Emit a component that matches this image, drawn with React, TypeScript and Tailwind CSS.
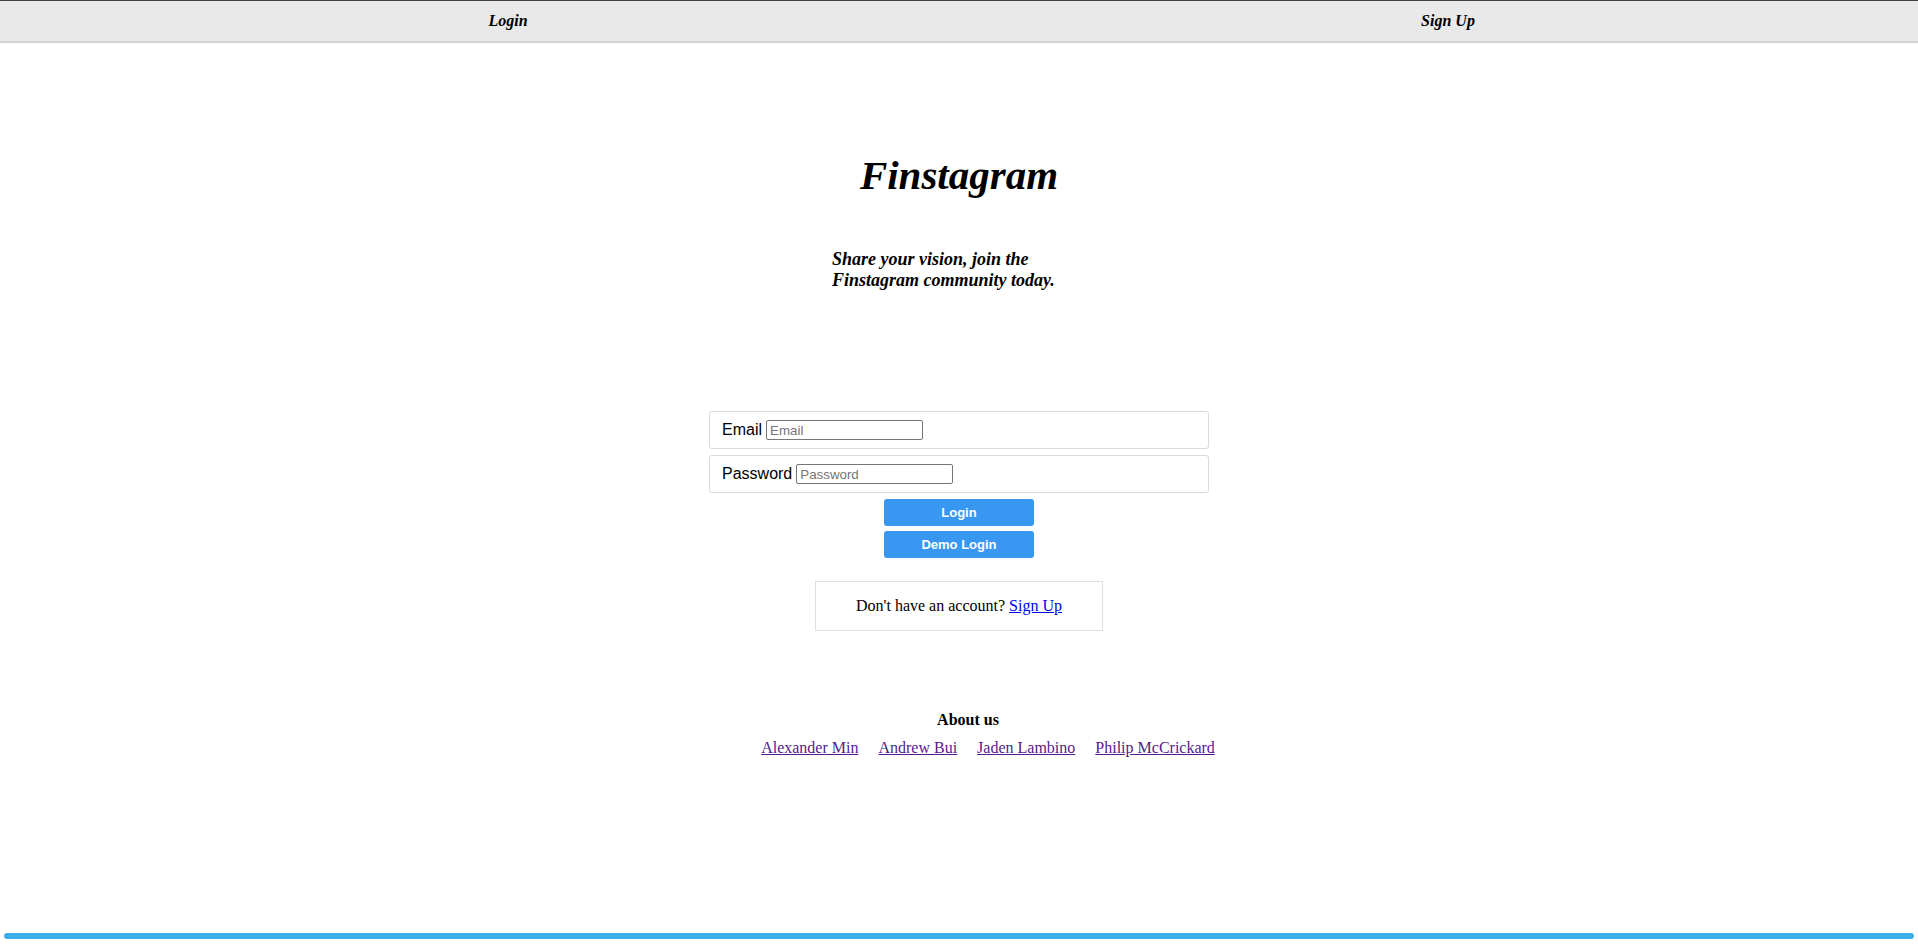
import React from "react";

export default function App() {
  const serif = { fontFamily: '"Liberation Serif", "Times New Roman", serif' };
  return (
    <div className="min-h-screen flex flex-col bg-white text-black" style={serif}>
      <nav className="h-[43px] bg-[#e9e9e9] border-t border-t-[#3f3f3f] border-b-2 border-b-[#d3d3d3] flex items-center">
        <div className="w-[1016px] flex justify-center">
          <a className="text-[16px] font-bold italic text-black cursor-pointer">Login</a>
        </div>
        <div className="w-[864px] flex justify-center">
          <a className="text-[16px] font-bold italic text-black cursor-pointer">Sign Up</a>
        </div>
      </nav>

      <h1 className="mt-[109px] text-center text-[41px] leading-[46px] font-bold italic">Finstagram</h1>

      <p className="mt-[51px] mx-auto w-[254px] text-[18px] leading-[21px] font-bold italic text-left">
        Share your vision, join the Finstagram community today.
      </p>

      <form
        className="mt-[120px] mx-auto w-[500px] flex flex-col items-center"
        style={{ fontFamily: '"Liberation Sans", Arial, sans-serif' }}
        onSubmit={(e) => e.preventDefault()}
      >
        <div className="w-full h-[38px] border border-[#dbdbdb] rounded-[3px] flex items-center pl-[12px] gap-[4px]">
          <label className="text-[16px]">Email</label>
          <input
            type="text"
            placeholder="Email"
            className="w-[157px] h-[20px] border border-[#767676] rounded-[2px] px-[3px] text-[13.33px] placeholder:text-[#757575] outline-none"
          />
        </div>
        <div className="mt-[6px] w-full h-[38px] border border-[#dbdbdb] rounded-[3px] flex items-center pl-[12px] gap-[4px]">
          <label className="text-[16px]">Password</label>
          <input
            type="password"
            placeholder="Password"
            className="w-[157px] h-[20px] border border-[#767676] rounded-[2px] px-[3px] text-[13.33px] placeholder:text-[#757575] outline-none"
          />
        </div>
        <button className="mt-[6px] w-[150px] h-[27px] rounded-[3px] bg-[#3897f0] text-white text-[13px] font-bold">
          Login
        </button>
        <button className="mt-[5px] w-[150px] h-[27px] rounded-[3px] bg-[#3897f0] text-white text-[13px] font-bold">
          Demo Login
        </button>
      </form>

      <div className="mt-[23px] mx-auto w-[288px] h-[50px] border border-[#e0e0e0] flex items-center justify-center text-[16px]">
        <span>
          Don't have an account?{" "}
          <a className="text-[#0000ee] underline cursor-pointer">Sign Up</a>
        </span>
      </div>

      <div className="mt-[80px] flex flex-col items-center">
        <h3 className="pl-[18px] text-[16px] font-bold leading-[18px]">About us</h3>
        <div className="mt-[10px] pl-[58px] flex justify-center gap-[20px] text-[16px] leading-[18px]">
          <a className="text-[#551a8b] underline cursor-pointer">Alexander Min</a>
          <a className="text-[#551a8b] underline cursor-pointer">Andrew Bui</a>
          <a className="text-[#551a8b] underline cursor-pointer">Jaden Lambino</a>
          <a className="text-[#551a8b] underline cursor-pointer">Philip McCrickard</a>
        </div>
      </div>

      <div className="mt-auto mx-[4px] mb-[7px] h-[6px] rounded-full bg-[#3daee9]" />
    </div>
  );
}
